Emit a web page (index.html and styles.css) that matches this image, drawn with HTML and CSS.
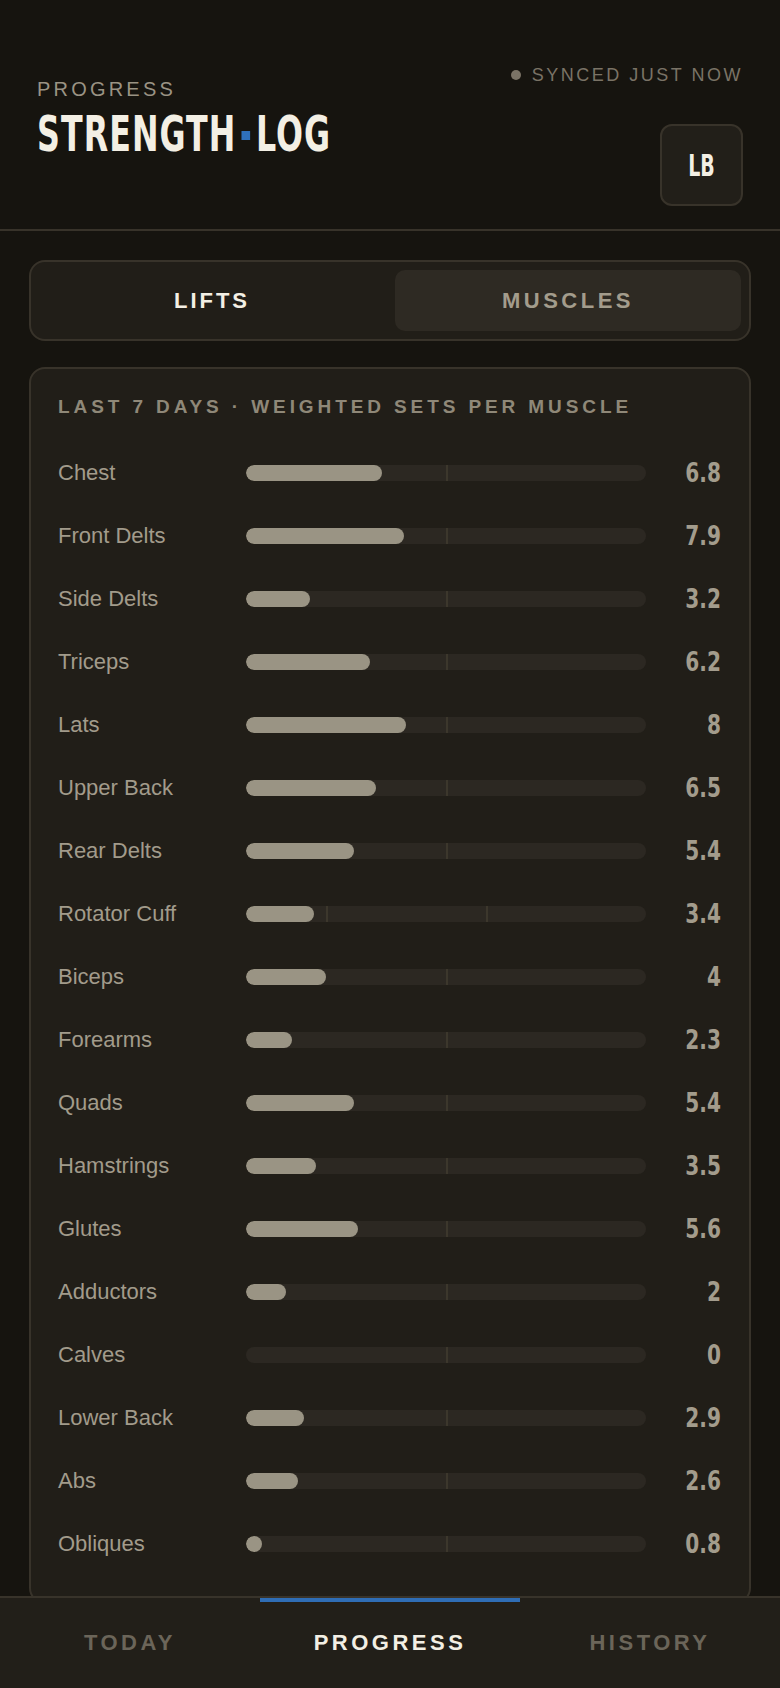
FILE: index.html
```html
<!DOCTYPE html>
<html>
<head>
  <title>Strength Log - Progress</title>
  <link rel="stylesheet" href="styles.css">
</head>
<body>
  <header class="header">
    <div class="brand">
      <div class="eyebrow">PROGRESS</div>
      <h1 class="title">STRENGTH<span class="dot"></span>LOG</h1>
    </div>
    <div class="header-side">
      <div class="sync"><span class="sync-dot"></span>SYNCED JUST NOW</div>
      <button class="unit"><span>LB</span></button>
    </div>
  </header>

  <div class="tabs">
    <button class="tab">LIFTS</button>
    <button class="tab active">MUSCLES</button>
  </div>

  <section class="card">
    <h2 class="card-title">LAST 7 DAYS · WEIGHTED SETS PER MUSCLE</h2>
    <div class="rows">
      <div class="row"><span class="name">Chest</span><div class="bar"><div class="fill" style="width: 34%"></div><i class="tick" style="left: 50%"></i></div><span class="value">6.8</span></div>
      <div class="row"><span class="name">Front Delts</span><div class="bar"><div class="fill" style="width: 39.5%"></div><i class="tick" style="left: 50%"></i></div><span class="value">7.9</span></div>
      <div class="row"><span class="name">Side Delts</span><div class="bar"><div class="fill" style="width: 16%"></div><i class="tick" style="left: 50%"></i></div><span class="value">3.2</span></div>
      <div class="row"><span class="name">Triceps</span><div class="bar"><div class="fill" style="width: 31%"></div><i class="tick" style="left: 50%"></i></div><span class="value">6.2</span></div>
      <div class="row"><span class="name">Lats</span><div class="bar"><div class="fill" style="width: 40%"></div><i class="tick" style="left: 50%"></i></div><span class="value">8</span></div>
      <div class="row"><span class="name">Upper Back</span><div class="bar"><div class="fill" style="width: 32.5%"></div><i class="tick" style="left: 50%"></i></div><span class="value">6.5</span></div>
      <div class="row"><span class="name">Rear Delts</span><div class="bar"><div class="fill" style="width: 27%"></div><i class="tick" style="left: 50%"></i></div><span class="value">5.4</span></div>
      <div class="row"><span class="name">Rotator Cuff</span><div class="bar"><div class="fill" style="width: 17%"></div><i class="tick" style="left: 20%"></i><i class="tick" style="left: 60%"></i></div><span class="value">3.4</span></div>
      <div class="row"><span class="name">Biceps</span><div class="bar"><div class="fill" style="width: 20%"></div><i class="tick" style="left: 50%"></i></div><span class="value">4</span></div>
      <div class="row"><span class="name">Forearms</span><div class="bar"><div class="fill" style="width: 11.5%"></div><i class="tick" style="left: 50%"></i></div><span class="value">2.3</span></div>
      <div class="row"><span class="name">Quads</span><div class="bar"><div class="fill" style="width: 27%"></div><i class="tick" style="left: 50%"></i></div><span class="value">5.4</span></div>
      <div class="row"><span class="name">Hamstrings</span><div class="bar"><div class="fill" style="width: 17.5%"></div><i class="tick" style="left: 50%"></i></div><span class="value">3.5</span></div>
      <div class="row"><span class="name">Glutes</span><div class="bar"><div class="fill" style="width: 28%"></div><i class="tick" style="left: 50%"></i></div><span class="value">5.6</span></div>
      <div class="row"><span class="name">Adductors</span><div class="bar"><div class="fill" style="width: 10%"></div><i class="tick" style="left: 50%"></i></div><span class="value">2</span></div>
      <div class="row"><span class="name">Calves</span><div class="bar"><i class="tick" style="left: 50%"></i></div><span class="value">0</span></div>
      <div class="row"><span class="name">Lower Back</span><div class="bar"><div class="fill" style="width: 14.5%"></div><i class="tick" style="left: 50%"></i></div><span class="value">2.9</span></div>
      <div class="row"><span class="name">Abs</span><div class="bar"><div class="fill" style="width: 13%"></div><i class="tick" style="left: 50%"></i></div><span class="value">2.6</span></div>
      <div class="row"><span class="name">Obliques</span><div class="bar"><div class="fill" style="width: 4%"></div><i class="tick" style="left: 50%"></i></div><span class="value">0.8</span></div>
    </div>
  </section>

  <nav class="nav">
    <a class="nav-item">TODAY</a>
    <a class="nav-item active">PROGRESS</a>
    <a class="nav-item">HISTORY</a>
  </nav>
</body>
</html>
```

FILE: styles.css
```css
body {
  margin: 0;
  background-color: #16140f;
  font-family: "Liberation Sans", Arial, sans-serif;
  color: #a39c8c;
  padding-bottom: 120px;
}

button {
  font-family: inherit;
  border: none;
  cursor: pointer;
}

.header {
  box-sizing: border-box;
  height: 231px;
  display: flex;
  justify-content: space-between;
  align-items: flex-start;
  padding: 64px 37px 0;
  border-bottom: 2px solid #38332a;
}

.brand {
  margin-top: 13px;
}

.eyebrow {
  font-size: 20px;
  line-height: 24px;
  letter-spacing: 3.2px;
  color: #9a9384;
}

.title {
  margin: 8px 0 0;
  font-family: "DejaVu Sans Condensed", "DejaVu Sans", sans-serif;
  font-stretch: condensed;
  font-weight: bold;
  font-size: 49px;
  line-height: 52px;
  letter-spacing: 1.5px;
  color: #f3efe4;
  transform: scaleX(0.72);
  transform-origin: left center;
  white-space: nowrap;
}

.dot {
  display: inline-block;
  width: 12px;
  height: 9px;
  background-color: #2f70bb;
  margin: 0 8px 0 7px;
  vertical-align: 11px;
}

.header-side {
  display: flex;
  flex-direction: column;
  align-items: flex-end;
}

.sync {
  display: flex;
  align-items: center;
  font-size: 18px;
  line-height: 22px;
  letter-spacing: 2.5px;
  color: #7a7366;
}

.sync-dot {
  width: 10px;
  height: 10px;
  border-radius: 50%;
  background-color: #7a7366;
  margin-right: 11px;
}

.unit {
  margin-top: 38px;
  box-sizing: border-box;
  width: 83px;
  height: 82px;
  border: 2px solid #38332a;
  border-radius: 12px;
  background-color: #221f19;
  color: #f3efe4;
  font-family: "DejaVu Sans Condensed", "DejaVu Sans", sans-serif;
  font-stretch: condensed;
  font-weight: bold;
  font-size: 31px;
}

.unit span {
  display: inline-block;
  transform: scaleX(0.68);
}

.tabs {
  margin: 29px 29px 0;
  display: grid;
  grid-template-columns: 1fr 1fr;
  gap: 10px;
  padding: 8px;
  border: 2px solid #38332a;
  border-radius: 16px;
  background-color: #211e18;
}

.tab {
  height: 61px;
  border-radius: 10px;
  background: transparent;
  color: #f3efe4;
  font-size: 22px;
  font-weight: bold;
  letter-spacing: 3px;
}

.tab.active {
  background-color: #2e2a23;
  color: #a39c8c;
  letter-spacing: 3.5px;
}

.card {
  margin: 26px 29px 0;
  padding: 27px 28px 27px 27px;
  border: 2px solid #38332a;
  border-radius: 16px;
  background-color: #211e18;
}

.card-title {
  margin: 0;
  font-size: 19px;
  line-height: 22px;
  letter-spacing: 3.9px;
  color: #8f8878;
  white-space: nowrap;
}

.rows {
  margin-top: 23px;
}

.row {
  display: grid;
  grid-template-columns: 188px 1fr 75px;
  align-items: center;
  height: 63px;
}

.name {
  font-size: 22px;
  color: #a29b8b;
}

.bar {
  position: relative;
  height: 16px;
  border-radius: 8px;
  background-color: #2c2822;
  overflow: hidden;
}

.fill {
  height: 100%;
  min-width: 16px;
  border-radius: 8px;
  background-color: #9a9484;
  position: relative;
  z-index: 1;
}

.tick {
  position: absolute;
  top: 0;
  bottom: 0;
  width: 2px;
  background-color: #3c372c;
}

.value {
  text-align: right;
  font-family: "DejaVu Sans Condensed", "DejaVu Sans", sans-serif;
  font-stretch: condensed;
  font-weight: bold;
  font-size: 26px;
  color: #a39c8c;
  transform: scaleX(0.86);
  transform-origin: right center;
}

.nav {
  position: fixed;
  left: 0;
  right: 0;
  bottom: 0;
  height: 92px;
  box-sizing: border-box;
  border-top: 2px solid #38332a;
  background-color: #221f19;
  display: grid;
  grid-template-columns: repeat(3, 1fr);
}

.nav-item {
  display: flex;
  align-items: center;
  justify-content: center;
  font-size: 22px;
  font-weight: bold;
  letter-spacing: 3.5px;
  color: #6b6559;
  border-top: 4px solid transparent;
  margin-bottom: 4px;
}

.nav-item.active {
  color: #f3efe4;
  border-top-color: #2f6db5;
}
```
